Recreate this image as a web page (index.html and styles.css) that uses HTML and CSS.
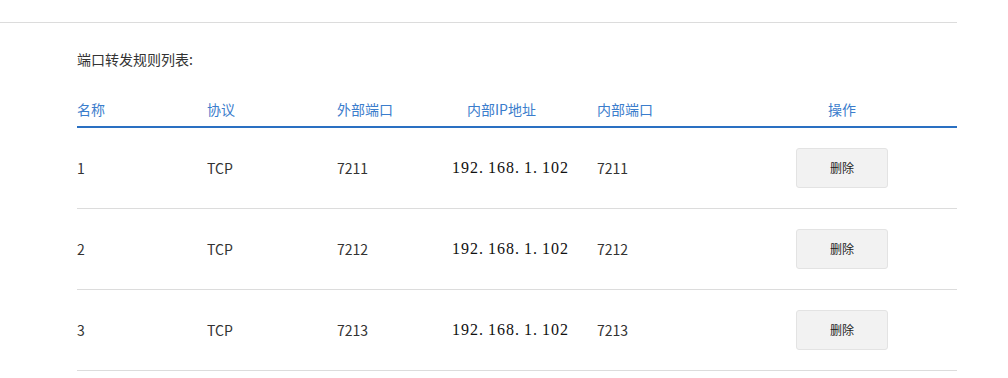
FILE: index.html
```html
<!DOCTYPE html>
<html lang="zh-CN">
<head>
    <meta charset="UTF-8">
    <meta name="viewport" content="width=device-width, initial-scale=1.0">
    <title>端口转发</title>
    <link rel="stylesheet" href="styles.css">
</head>
<body>

    <div class="page">
        <div class="top-bar"></div>

        <div class="content">
            <h3 class="list-title">端口转发规则列表:</h3>

            <table class="rules">
                <thead>
                    <tr>
                        <th>名称</th>
                        <th>协议</th>
                        <th>外部端口</th>
                        <th>内部IP地址</th>
                        <th>内部端口</th>
                        <th class="op">操作</th>
                    </tr>
                </thead>
                <tbody>
                    <tr>
                        <td>1</td>
                        <td>TCP</td>
                        <td>7211</td>
                        <td class="ip">192<span class="dot">.</span>168<span class="dot">.</span>1<span class="dot">.</span>102</td>
                        <td>7211</td>
                        <td class="op"><button class="btn-del">删除</button></td>
                    </tr>
                    <tr>
                        <td>2</td>
                        <td>TCP</td>
                        <td>7212</td>
                        <td class="ip">192<span class="dot">.</span>168<span class="dot">.</span>1<span class="dot">.</span>102</td>
                        <td>7212</td>
                        <td class="op"><button class="btn-del">删除</button></td>
                    </tr>
                    <tr>
                        <td>3</td>
                        <td>TCP</td>
                        <td>7213</td>
                        <td class="ip">192<span class="dot">.</span>168<span class="dot">.</span>1<span class="dot">.</span>102</td>
                        <td>7213</td>
                        <td class="op"><button class="btn-del">删除</button></td>
                    </tr>
                </tbody>
            </table>
        </div>
    </div>

</body>
</html>
```

FILE: styles.css
```css
/* Basic Reset */
* {
    margin: 0;
    padding: 0;
    box-sizing: border-box;
}

body {
    font-family: "Noto Sans CJK SC", "Noto Sans", sans-serif;
    font-size: 14px;
    color: #333;
    background-color: #fff;
}

.page {
    width: 957px;
}

.top-bar {
    height: 23px;
    border-bottom: 1px solid #dcdcdc;
}

.content {
    padding-left: 77px;
}

.list-title {
    font-size: 14px;
    font-weight: normal;
    line-height: 20px;
    margin-top: 26px;
    color: #333;
}

/* Rules table */
.rules {
    margin-top: 23px;
    width: 880px;
    border-collapse: collapse;
    table-layout: fixed;
}

.rules th {
    width: 130px;
    height: 35px;
    text-align: left;
    font-weight: normal;
    color: #3b7dcc;
    border-bottom: 2px solid #2a70c2;
    vertical-align: middle;
}

.rules th.op {
    width: 230px;
    text-align: center;
}

.rules td {
    height: 81px;
    border-bottom: 1px solid #dcdcdc;
    vertical-align: middle;
    color: #333;
}

.rules td.op {
    text-align: center;
}

/* ip address: song-style digits, wide dots */
.rules td.ip {
    font-family: "Liberation Serif", serif;
    font-size: 16px;
    letter-spacing: 1px;
    color: #111;
    text-indent: -15px;
}

.rules td.ip .dot {
    margin-right: 4px;
}

.btn-del {
    width: 92px;
    height: 40px;
    background-color: #f2f2f2;
    border: 1px solid #e3e3e3;
    border-radius: 3px;
    font-family: "Noto Sans CJK SC", sans-serif;
    font-size: 12px;
    color: #222;
    cursor: pointer;
}

.btn-del:hover {
    background-color: #e8e8e8;
}
```
